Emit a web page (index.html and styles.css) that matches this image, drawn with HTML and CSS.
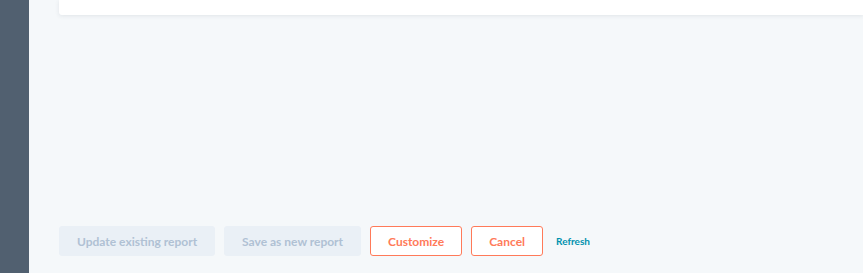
FILE: index.html
```html
<!DOCTYPE html>
<html lang="en">
  <head>
    <meta charset="UTF-8" />
    <title>Report</title>
    <link rel="stylesheet" href="styles.css">
  </head>
  <body>
    <nav class="sidebar"></nav>
    <main class="content">
      <section class="card"></section>
      <div class="actions">
        <button class="btn btn-disabled" disabled>Update existing report</button>
        <button class="btn btn-disabled" disabled>Save as new report</button>
        <button class="btn btn-outline">Customize</button>
        <button class="btn btn-outline">Cancel</button>
        <a class="link" href="#">Refresh</a>
      </div>
    </main>
  </body>
</html>
```

FILE: styles.css
```css
body {
  margin: 0;
  padding: 0;
  width: 100vw;
  height: 100vh;
  display: flex;
  overflow: hidden;
  background: #f5f8fa;
  font-family: Lato, sans-serif;
}

.sidebar {
  width: 29px;
  flex-shrink: 0;
  background: #516070;
}

.content {
  flex: 1;
  display: flex;
  flex-direction: column;
  padding-left: 30px;
}

.card {
  height: 15px;
  background: #ffffff;
  box-shadow: 0 1px 4px rgba(45, 62, 80, 0.1);
  border-radius: 0 0 0 3px;
}

.actions {
  display: flex;
  align-items: center;
  margin-top: 211px;
  gap: 9px;
}

.btn {
  height: 30px;
  padding: 0 17px;
  font-family: inherit;
  font-size: 12px;
  font-weight: 700;
  border-radius: 3px;
  box-sizing: border-box;
}

.btn-disabled {
  background: #eaf0f6;
  color: #b0c1d4;
  border: 1px solid #eaf0f6;
}

.btn-outline {
  background: #ffffff;
  color: #ff7a59;
  border: 1px solid #ff7a59;
}

.link {
  margin-left: 4px;
  color: #0091ae;
  font-size: 10px;
  font-weight: 700;
  text-decoration: none;
}
```
